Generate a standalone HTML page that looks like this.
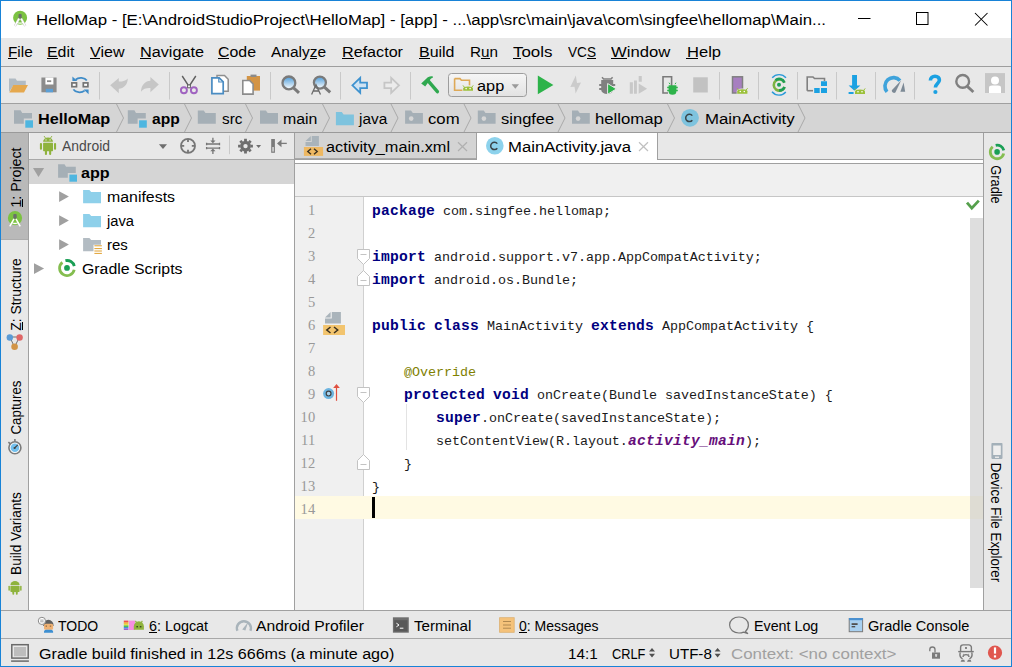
<!DOCTYPE html>
<html><head><meta charset="utf-8">
<style>
*{margin:0;padding:0;box-sizing:border-box}
html,body{width:1012px;height:667px;overflow:hidden;background:#fff}
body{position:relative;font-family:"Liberation Sans",sans-serif;color:#000}
.a{position:absolute}
.t{position:absolute;white-space:pre;line-height:1}
.u{text-decoration:none}
svg{position:absolute;overflow:visible}
.ln,.kw,.nm,.ann,.fld{font-family:"Liberation Mono",monospace;font-size:13.4px}
.ln{color:#999999;font-family:"Liberation Serif",serif!important;font-size:14.5px!important}
.nm{color:#1a1a1a}
.kw{font-weight:bold;color:#000080}
.ann{color:#808000}
.fld{font-weight:bold;font-style:italic;color:#660e7a}
</style></head><body>
<!-- backgrounds -->
<div class="a" style="left:0;top:0;width:1012px;height:38px;background:#fff"></div>
<div class="a" style="left:0;top:38px;width:1012px;height:28px;background:#e8e8e8"></div>
<div class="a" style="left:0;top:66px;width:1012px;height:1px;background:#9e9e9e"></div>
<div class="a" style="left:0;top:67px;width:1012px;height:36px;background:#e8e8e8"></div>
<div class="a" style="left:0;top:103px;width:1012px;height:1px;background:#a0a0a0"></div>
<div class="a" style="left:0;top:104px;width:1012px;height:28px;background:#d5d5d5"></div>
<div class="a" style="left:0;top:132px;width:1012px;height:1px;background:#9a9a9a"></div>
<!-- left strip -->
<div class="a" style="left:0;top:133px;width:28px;height:478px;background:#e8e8e8"></div>
<div class="a" style="left:1px;top:133px;width:27px;height:107px;background:#b9b9b9"></div>
<div class="a" style="left:1px;top:239px;width:27px;height:1px;background:#adadad"></div>
<div class="a" style="left:28px;top:133px;width:1px;height:478px;background:#a0a0a0"></div>
<!-- project panel -->
<div class="a" style="left:29px;top:133px;width:265px;height:26px;background:#e8e8e8"></div>
<div class="a" style="left:29px;top:159px;width:265px;height:1px;background:#a8a8a8"></div>
<div class="a" style="left:29px;top:133px;width:1px;height:26px;background:#f4f4f4"></div>
<div class="a" style="left:29px;top:160px;width:265px;height:451px;background:#fff"></div>
<div class="a" style="left:29px;top:160px;width:265px;height:24px;background:#d5d5d5"></div>
<div class="a" style="left:294px;top:133px;width:1px;height:478px;background:#a0a0a0"></div>
<!-- editor tabs -->
<div class="a" style="left:295px;top:133px;width:688px;height:26px;background:#e8e8e8"></div>
<div class="a" style="left:295px;top:159px;width:688px;height:1px;background:#a0a0a0"></div>
<div class="a" style="left:295px;top:160px;width:688px;height:3px;background:#fff"></div>
<div class="a" style="left:295px;top:133px;width:181px;height:25px;background:#d4d4d4"></div>
<div class="a" style="left:295px;top:158px;width:181px;height:1px;background:#a8a8a8"></div>
<div class="a" style="left:476px;top:133px;width:1px;height:26px;background:#a0a0a0"></div>
<div class="a" style="left:477px;top:133px;width:180px;height:30px;background:#fff"></div>
<div class="a" style="left:657px;top:133px;width:1px;height:27px;background:#a0a0a0"></div>
<div class="a" style="left:295px;top:163px;width:688px;height:1px;background:#a0a0a0"></div>
<div class="a" style="left:295px;top:164px;width:688px;height:32px;background:#f0f0f0"></div>
<div class="a" style="left:295px;top:196px;width:688px;height:1px;background:#c6c6c6"></div>
<!-- editor -->
<div class="a" style="left:295px;top:197px;width:688px;height:413px;background:#fff"></div>
<div class="a" style="left:295px;top:197px;width:68px;height:413px;background:#f0f0f0"></div>
<div class="a" style="left:363px;top:197px;width:1px;height:413px;background:#d0d0d0"></div>
<div class="a" style="left:295px;top:496px;width:688px;height:23px;background:#fffae3"></div>
<div class="a" style="left:970px;top:218px;width:13px;height:370px;background:rgba(200,200,200,0.6)"></div>
<div class="a" style="left:983px;top:133px;width:1px;height:478px;background:#a0a0a0"></div>
<!-- right strip -->
<div class="a" style="left:984px;top:133px;width:28px;height:478px;background:#e8e8e8"></div>
<!-- bottom -->
<div class="a" style="left:0;top:610px;width:1012px;height:1px;background:#a0a0a0"></div>
<div class="a" style="left:0;top:611px;width:1012px;height:27px;background:#e8e8e8"></div>
<div class="a" style="left:0;top:638px;width:1012px;height:1px;background:#a8a8a8"></div>
<div class="a" style="left:0;top:639px;width:1012px;height:28px;background:#e8e8e8"></div>
<div class="t ln" style="left:275.5px;width:40px;text-align:right;top:202.70px;letter-spacing:0.3px">1</div>
<div class="t kw" style="left:372.0px;top:204.41px;font-size:14.6px;letter-spacing:0.240px">package</div>
<div class="t nm" style="left:435.0px;top:205.33px;font-size:13.4px;letter-spacing:-0.040px"> com.singfee.hellomap;</div>
<div class="t ln" style="left:275.5px;width:40px;text-align:right;top:225.70px;letter-spacing:0.3px">2</div>
<div class="t ln" style="left:275.5px;width:40px;text-align:right;top:248.70px;letter-spacing:0.3px">3</div>
<div class="t kw" style="left:372.0px;top:250.41px;font-size:14.6px;letter-spacing:0.240px">import</div>
<div class="t nm" style="left:426.0px;top:251.33px;font-size:13.4px;letter-spacing:-0.040px"> android.support.v7.app.AppCompatActivity;</div>
<div class="t ln" style="left:275.5px;width:40px;text-align:right;top:271.70px;letter-spacing:0.3px">4</div>
<div class="t kw" style="left:372.0px;top:273.41px;font-size:14.6px;letter-spacing:0.240px">import</div>
<div class="t nm" style="left:426.0px;top:274.33px;font-size:13.4px;letter-spacing:-0.040px"> android.os.Bundle;</div>
<div class="t ln" style="left:275.5px;width:40px;text-align:right;top:294.70px;letter-spacing:0.3px">5</div>
<div class="t ln" style="left:275.5px;width:40px;text-align:right;top:317.70px;letter-spacing:0.3px">6</div>
<div class="t kw" style="left:372.0px;top:319.41px;font-size:14.6px;letter-spacing:0.240px">public</div>
<div class="t kw" style="left:434.0px;top:319.41px;font-size:14.6px;letter-spacing:0.240px">class</div>
<div class="t nm" style="left:479.0px;top:320.33px;font-size:13.4px;letter-spacing:-0.040px"> MainActivity </div>
<div class="t kw" style="left:591.0px;top:319.41px;font-size:14.6px;letter-spacing:0.240px">extends</div>
<div class="t nm" style="left:654.0px;top:320.33px;font-size:13.4px;letter-spacing:-0.040px"> AppCompatActivity {</div>
<div class="t ln" style="left:275.5px;width:40px;text-align:right;top:340.70px;letter-spacing:0.3px">7</div>
<div class="t ln" style="left:275.5px;width:40px;text-align:right;top:363.70px;letter-spacing:0.3px">8</div>
<div class="t ann" style="left:404.0px;top:366.33px;font-size:13.4px;letter-spacing:-0.040px">@Override</div>
<div class="t ln" style="left:275.5px;width:40px;text-align:right;top:386.70px;letter-spacing:0.3px">9</div>
<div class="t kw" style="left:404.0px;top:388.41px;font-size:14.6px;letter-spacing:0.240px">protected</div>
<div class="t kw" style="left:493.0px;top:388.41px;font-size:14.6px;letter-spacing:0.240px">void</div>
<div class="t nm" style="left:529.0px;top:389.33px;font-size:13.4px;letter-spacing:-0.040px"> onCreate(Bundle savedInstanceState) {</div>
<div class="t ln" style="left:275.5px;width:40px;text-align:right;top:409.70px;letter-spacing:0.3px">10</div>
<div class="t kw" style="left:436.0px;top:411.41px;font-size:14.6px;letter-spacing:0.240px">super</div>
<div class="t nm" style="left:481.0px;top:412.33px;font-size:13.4px;letter-spacing:-0.040px">.onCreate(savedInstanceState);</div>
<div class="t ln" style="left:275.5px;width:40px;text-align:right;top:432.70px;letter-spacing:0.3px">11</div>
<div class="t nm" style="left:372.0px;top:435.33px;font-size:13.4px;letter-spacing:-0.040px">        setContentView(R.layout.</div>
<div class="t fld" style="left:628.0px;top:434.41px;font-size:14.6px;letter-spacing:0.240px">activity_main</div>
<div class="t nm" style="left:745.0px;top:435.33px;font-size:13.4px;letter-spacing:-0.040px">);</div>
<div class="t ln" style="left:275.5px;width:40px;text-align:right;top:455.70px;letter-spacing:0.3px">12</div>
<div class="t nm" style="left:372.0px;top:458.33px;font-size:13.4px;letter-spacing:-0.040px">    }</div>
<div class="t ln" style="left:275.5px;width:40px;text-align:right;top:478.70px;letter-spacing:0.3px">13</div>
<div class="t nm" style="left:372.0px;top:481.33px;font-size:13.4px;letter-spacing:-0.040px">}</div>
<div class="t ln" style="left:275.5px;width:40px;text-align:right;top:501.70px;letter-spacing:0.3px">14</div>
<svg width="1012" height="667" viewBox="0 0 1012 667" style="left:0;top:0">
<defs>
<linearGradient id="lens" x1="0" y1="0" x2="0" y2="1"><stop offset="0" stop-color="#4a9ad8"/><stop offset="1" stop-color="#ffffff"/></linearGradient>
<linearGradient id="combo" x1="0" y1="0" x2="0" y2="1"><stop offset="0" stop-color="#f6f6f6"/><stop offset="1" stop-color="#e2e2e2"/></linearGradient>
</defs>
<!-- ===== title bar ===== -->
<g transform="translate(20.1 17.8)"><circle r="7" fill="#7cc242"/>
<rect x="-1.6" y="-3.8" width="3.2" height="4.6" rx="1" fill="#6a6f6a"/>
<path d="M-1 0.8 L-5.2 8.2 M1 0.8 L5.2 8.2" stroke="#c9c9c9" stroke-width="2.4" fill="none"/>
<path d="M-1 0.8 L-5.2 8.2 M1 0.8 L5.2 8.2" stroke="#ffffff" stroke-width="1.4" fill="none"/>
<path d="M-3.6 4.4 Q0 6.4 3.6 4.4" stroke="#ffffff" stroke-width="1.3" fill="none"/></g>
<path d="M858 18.5h12.5" stroke="#000" stroke-width="1"/>
<rect x="916.5" y="12.5" width="11.5" height="12" fill="none" stroke="#000" stroke-width="1"/>
<path d="M975 13 L987.5 25.5 M987.5 13 L975 25.5" stroke="#000" stroke-width="1.05"/>

<!-- ===== toolbar ===== -->
<g stroke="#c9c9c9" stroke-width="1">
<path d="M99.5 72v27.5 M169.5 72v27.5 M270.5 72v27.5 M340.5 72v27.5 M410.5 72v27.5 M719.5 72v27.5 M758.5 72v27.5 M797.5 72v27.5 M836.5 72v27.5 M875.5 72v27.5 M914.5 72v27.5"/>
</g>
<!-- open -->
<path d="M9 78.5h6.5l1.5 2.2h8.8v5H13.2L9 92z" fill="#b1bbc3"/>
<path d="M9.3 92.6 L13.3 85 H28 L24 92.6z" fill="#e5a84e"/>
<!-- save -->
<path d="M41.4 77.5h15.2v14.8H41.4z" fill="#8c8c8c"/>
<path d="M45.4 77.5h8v7h-8z" fill="#ffffff"/>
<path d="M47 80.3h4.2v1.8H47z" fill="#8c8c8c"/>
<path d="M45.8 88.8h7.2v3.5h-7.2z" fill="#5b9fd6"/>
<!-- sync -->
<path d="M75.6 79.6 A6.6 4.6 0 0 1 86.8 80.6 M73.4 89.4 A6.6 4.6 0 0 0 84.6 90.6" stroke="#3f8cc8" stroke-width="1.8" fill="none"/>
<path d="M72.4 76.4 V81 H77.4z M88.6 94.2 V89.4 H83.6z" fill="#3f8cc8"/>
<rect x="71.9" y="82.9" width="4.6" height="3.8" fill="#fff" stroke="#747474" stroke-width="1.7"/>
<rect x="83.3" y="82.9" width="4.6" height="3.8" fill="#fff" stroke="#747474" stroke-width="1.7"/>
<!-- undo/redo -->
<path d="M110.2 85.3 L118.8 77.9 V81.6 C123 81.5 126.5 80.5 127.8 78.4 C127.6 84.6 123.8 88.4 118.8 88.8 V93.2z" fill="#c6c6c6"/>
<path d="M158.8 84.4 L150.4 77 V80.8 C145.5 81 141.2 84.6 141 91.8 C143.2 88.6 146.6 87.8 150.4 88 V92.3z" fill="#c6c6c6"/>
<!-- cut -->
<path d="M182.2 76 L189 86.5 L195.8 76" stroke="#606060" stroke-width="1.4" fill="none"/>
<rect x="187.6" y="85" width="2.8" height="2.8" fill="#fff" stroke="#606060" stroke-width="1"/>
<circle cx="183.9" cy="90.3" r="3" fill="none" stroke="#a064c0" stroke-width="1.9"/>
<circle cx="193.9" cy="90.3" r="3" fill="none" stroke="#a064c0" stroke-width="1.9"/>
<!-- copy -->
<path d="M217 75.5h7.5l3.7 3.7v12h-11.2z" fill="#fff" stroke="#8f8f8f" stroke-width="1.5"/>
<path d="M211.9 77.9h7.3l4 4v11.8h-11.3z" fill="#fff" stroke="#4a8cc2" stroke-width="1.7"/>
<path d="M218.8 78v4h4" fill="none" stroke="#4a8cc2" stroke-width="1.2"/>
<!-- paste -->
<path d="M246.8 76h13.2v14.6h-13.2z" fill="#d39445"/>
<path d="M250.5 74.6h6v2.4h-6z" fill="#8a8a8a"/>
<path d="M242.8 80.5h6.8l3.5 3.5v10.1h-10.3z" fill="#fff" stroke="#8c8c8c" stroke-width="1.6"/>
<!-- find -->
<circle cx="288.9" cy="82.9" r="6.4" fill="url(#lens)" stroke="#7a7a7a" stroke-width="2.3"/>
<path d="M293.6 87.8 L299 92.8" stroke="#7a7a7a" stroke-width="3"/>
<!-- replace -->
<circle cx="319.9" cy="82.6" r="6" fill="url(#lens)" stroke="#7a7a7a" stroke-width="2.3"/>
<path d="M324.4 87.2 L330.2 92.4" stroke="#7a7a7a" stroke-width="3"/>
<path d="M311.6 94.5 L316 84.8 L320.5 94.5 M313.2 91 H318.8" stroke="#6a6a6a" stroke-width="1.3" fill="none"/>
<!-- back / forward -->
<path d="M352.4 85.3 L360.2 77.8 V82.6 H367 V88.1 H360.2 V92.8z" fill="#cfe3f3" stroke="#3e92cf" stroke-width="1.8" stroke-linejoin="miter"/>
<path d="M399 85.3 L391.2 77.8 V82.6 H384.4 V88.1 H391.2 V92.8z" fill="#ececec" stroke="#c6c6c6" stroke-width="1.8"/>
<!-- hammer -->
<path d="M421.2 83.4 L427.8 77.2 C429.8 76.2 431.6 76 432.8 76.4 L433 77.6 C431.6 78.2 430.6 79 429.8 80.2 L425.2 86.4z" fill="#2fa84f"/>
<path d="M428.6 81.4 L437.4 91.6" stroke="#2fa84f" stroke-width="3.4" stroke-linecap="round"/>
<!-- combo -->
<rect x="448.5" y="73.5" width="78" height="23" rx="3" fill="url(#combo)" stroke="#9d9d9d" stroke-width="1"/>
<path d="M454.6 78.6h5.4l1.4 1.6h8.1v5.2 M454.6 78.6v11.6h8" fill="none" stroke="#dea957" stroke-width="1.6"/>
<path d="M462.7 91.1 V88.2 Q462.7 85.6 468.1 85.6 Q473.5 85.6 473.5 88.2 V91.1z" fill="#ececec"/><path d="M463.2 90.8 V88.4 Q463.2 86.4 468.1 86.4 Q473.0 86.4 473.0 88.4 V90.8z" fill="#9bc03a"/><path d="M464.4 87.2 l-1.4 -1.8 M471.8 87.2 l1.4 -1.8" stroke="#9bc03a" stroke-width="1"/><circle cx="466.1" cy="88.6" r="0.8" fill="#fff"/><circle cx="470.1" cy="88.6" r="0.8" fill="#fff"/>
<path d="M511.6 84.2h7.4l-3.7 4.5z" fill="#9a9a9a"/>
<!-- run -->
<path d="M537.8 75.6 V94.2 L553.4 84.9z" fill="#2db34a"/>
<!-- lightning -->
<path d="M575.8 75.4 L570.3 87.1 L574.5 86.8 L575.6 93.4 L581 82.5 L577 82.9z" fill="#cbcbcb"/>
<!-- debug -->
<path d="M602 77.2 L603.6 79 H611 L612.6 77.2" stroke="#808080" stroke-width="1.5" fill="none"/>
<path d="M601.2 80 h12 v4 h2 v2 h-2 v2 h2 v2 h-2 a6 4 0 0 1 -12 0 h-2 v-2 h2 v-2 h-2 v-2 h2z" fill="#808080"/>
<path d="M607.6 83.5 V94.3 L616.4 88.9z" fill="#2db34a" stroke="#e8e8e8" stroke-width="1"/>
<!-- profile -->
<path d="M629.8 82.2h3.1v11.6h-3.1z M634 80.5h2.9v13.3H634z M638.7 76h3.1v5.8h-3.1z M638.7 83.6 V93.8 L647.1 88.8z" fill="#c8c8c8"/>
<!-- attach -->
<path d="M671.6 86 V76.8 H663 V93 H668" fill="none" stroke="#7a7a7a" stroke-width="1.6"/>
<path d="M668.6 85.2 h7.8 v1.5 h1.4 v1.5 h-1.4 v1.5 h1.4 v1.5 h-1.4 a3.9 3.6 0 0 1 -7.8 0 h-1.4 v-1.5 h1.4 v-1.5 h-1.4 v-1.5 h1.4z" fill="#2db34a"/>
<path d="M670 84.2 l-1 -1.5 M675 84.2 l1 -1.5" stroke="#2db34a" stroke-width="1"/>
<!-- stop -->
<rect x="693.2" y="77.3" width="14.6" height="15.2" fill="#c2c2c2"/>
<!-- avd -->
<rect x="732.5" y="76.8" width="10" height="16.2" fill="#a77fc0" stroke="#808080" stroke-width="1.5"/>
<path d="M736.7 94.1 V91.0 Q736.7 88.4 742.3 88.4 Q747.9 88.4 747.9 91.0 V94.1z" fill="#e8e8e8"/><path d="M737.2 93.8 V91.3 Q737.2 89.2 742.3 89.2 Q747.4 89.2 747.4 91.3 V93.8z" fill="#9bc03a"/><path d="M738.4 90.0 l-1.4 -1.8 M746.2 90.0 l1.4 -1.8" stroke="#9bc03a" stroke-width="1"/><circle cx="740.3" cy="91.5" r="0.8" fill="#fff"/><circle cx="744.3" cy="91.5" r="0.8" fill="#fff"/>
<!-- gradle sync -->
<path d="M772.2 77.8 A9 9 0 0 1 786 77.8 M772 91.8 A9 9 0 0 0 785.8 92" stroke="#2a9ad8" stroke-width="1.4" fill="none"/>
<path d="M784.4 82.6 A5.6 5.6 0 1 0 784.6 87" stroke="#7cb342" stroke-width="2.6" fill="none"/>
<path d="M775.5 80.2 A5.6 5.6 0 0 1 784.4 82.6 M784.6 87 A5.6 5.6 0 0 1 779 90.4" stroke="#1f9e56" stroke-width="2.6" fill="none"/>
<circle cx="779" cy="84.8" r="2" fill="#1f9e56"/>
<!-- project structure -->
<path d="M807.2 90.7 V77 H813 L814.5 78.5 H824.5 V81" fill="none" stroke="#808080" stroke-width="1.6"/>
<path d="M807.2 90.7 H813" stroke="#808080" stroke-width="1.6"/>
<path d="M821 81.2h6v4.9h-6z M814.2 88.1h5.5v4.8h-5.5z M821 88.1h6v4.8h-6z" fill="#1ba1e2"/>
<!-- sdk -->
<path d="M852.1 75.1h4.9v10.4h3.4l-5.9 5.2l-5.9 -5.2h3.5z" fill="#1ba1e2"/>
<path d="M848.6 92h5v2h-5z" fill="#1ba1e2"/>
<path d="M854.5 94.4 V91.3 Q854.5 88.6 860.0 88.6 Q865.5 88.6 865.5 91.3 V94.4z" fill="#e8e8e8"/><path d="M855.0 94.1 V91.5 Q855.0 89.4 860.0 89.4 Q865.0 89.4 865.0 91.5 V94.1z" fill="#9bc03a"/><path d="M856.2 90.2 l-1.4 -1.8 M863.8 90.2 l1.4 -1.8" stroke="#9bc03a" stroke-width="1"/><circle cx="858.0" cy="91.8" r="0.8" fill="#fff"/><circle cx="862.0" cy="91.8" r="0.8" fill="#fff"/>
<!-- profiler gauge -->
<path d="M887 91.8 A8 8 0 0 1 900 80.6" stroke="#3fa3db" stroke-width="3.6" fill="none"/>
<path d="M901.2 80.2 L891.8 90.2 a2.4 2.4 0 0 0 3.6 2.4z" fill="#7d8a96"/>
<path d="M903.6 82.6 L900.4 91.8 H905.2z" fill="#7d8a96"/>
<!-- help -->
<path d="M930.4 80.6 C930.4 77.6 932.6 76.2 935 76.2 C937.8 76.2 939.4 78 939.4 80 C939.4 83.4 935.4 83.6 935.4 87.6" stroke="#1ba1e2" stroke-width="3.6" fill="none"/>
<circle cx="935.4" cy="92" r="2.1" fill="#1ba1e2"/>
<!-- search -->
<circle cx="962.7" cy="81.4" r="6.4" fill="none" stroke="#808080" stroke-width="2.4"/>
<path d="M967.3 86.4 L973.4 92" stroke="#808080" stroke-width="2.8"/>
<!-- user -->
<rect x="985" y="73.1" width="20" height="19.9" fill="#c6c6c6"/>
<circle cx="995" cy="80.6" r="4" fill="#fff"/>
<path d="M989 93 V88 a3 2.4 0 0 1 3 -2.4 h6 a3 2.4 0 0 1 3 2.4 V93z" fill="#fff"/>

<!-- ===== navbar ===== -->
<g stroke="#a9a9a9" stroke-width="1" fill="none">
<path d="M116.5 104 L123.5 118 L116.5 132"/>
<path d="M184.5 104 L191.5 118 L184.5 132"/>
<path d="M245.5 104 L252.5 118 L245.5 132"/>
<path d="M322.5 104 L329.5 118 L322.5 132"/>
<path d="M391 104 L398 118 L391 132"/>
<path d="M464 104 L471 118 L464 132"/>
<path d="M558 104 L565 118 L558 132"/>
<path d="M667.5 104 L674.5 118 L667.5 132"/>
<path d="M798 104 L805 118 L798 132"/>
</g>
<!-- module folders -->
<path d="M14 110.2 H20.6 L22.2 112.9 H32 V118.6 H23.8 V123.8 H14z" fill="#a5afb6"/>
<rect x="25.3" y="120.3" width="7.7" height="7.4" fill="#4eb6e0"/>
<path d="M127.8 110.2 H134.4 L136 112.9 H145.8 V118.6 H137.6 V123.8 H127.8z" fill="#a5afb6"/>
<rect x="139.1" y="120.3" width="7.7" height="7.4" fill="#4eb6e0"/>
<!-- src, main folder -->
<path d="M197.8 110.4 H203.7 L205.5 113.1 H215.8 V123.8 H197.8z" fill="#a5afb6"/>
<path d="M260 110.4 H265.9 L267.7 113.1 H278 V123.8 H260z" fill="#a5afb6"/>
<!-- java folder -->
<path d="M335.9 111.9 H341.8 L343.6 114.6 H353.9 V125.2 H335.9z" fill="#7ec3de"/>
<!-- packages -->
<g fill="#a5afb6">
<path d="M405.1 110.4 H411 L412.8 113.1 H422.9 V123.8 H405.1z"/>
<path d="M477.8 110.4 H483.7 L485.5 113.1 H495.6 V123.8 H477.8z"/>
<path d="M572 110.4 H577.9 L579.7 113.1 H589.8 V123.8 H572z"/>
</g>
<g fill="#d6d6d6">
<circle cx="411.2" cy="118.6" r="2.3"/><circle cx="483.9" cy="118.6" r="2.3"/><circle cx="578.1" cy="118.6" r="2.3"/>
</g>
<!-- class icon -->
<circle cx="690" cy="117.8" r="8.9" fill="#7ec3de"/>
<path d="M692.30 115.60 A3.7 3.7 0 1 0 692.30 120.20" stroke="#3a4448" stroke-width="1.5" fill="none"/>

<!-- ===== project header ===== -->
<g fill="#8fb33d">
<path d="M43.1 141.8 a4.95 4.4 0 0 1 9.9 0z"/>
<rect x="43.1" y="142.8" width="9.9" height="8.4" rx="0.6"/>
<rect x="39.9" y="142.9" width="2.1" height="6.9" rx="1"/>
<rect x="54" y="142.9" width="2.1" height="6.9" rx="1"/>
<rect x="44.9" y="150" width="2.1" height="4.9" rx="1"/>
<rect x="49.1" y="150" width="2.1" height="4.9" rx="1"/>
</g>
<path d="M44 136 l1.6 2.2 M52 136 l-1.6 2.2" stroke="#8fb33d" stroke-width="0.9"/>
<circle cx="46" cy="139.9" r="0.7" fill="#e8e8e8"/><circle cx="50.1" cy="139.9" r="0.7" fill="#e8e8e8"/>
<path d="M158.9 144.3 H167 L163 149z" fill="#6e6e6e"/>
<circle cx="188" cy="145.9" r="7" fill="none" stroke="#767676" stroke-width="1.8"/>
<path d="M188 138.9v3.2 M188 149.7v3.2 M181 145.9h3.2 M191.8 145.9h3.2" stroke="#767676" stroke-width="1.8"/>
<path d="M206.1 144h13.9 M206.1 148.1h13.9 M206.6 142.8v2.4 M219.5 142.8v2.4 M206.6 146.9v2.4 M219.5 146.9v2.4" stroke="#767676" stroke-width="1.3"/>
<path d="M212.9 137.8v3.6 M212.9 150.6v3.4" stroke="#767676" stroke-width="1.3"/>
<path d="M210.3 140.6h5.2l-2.6 2.6z M210.3 151.2h5.2l-2.6 -2.6z" fill="#767676"/>
<path d="M229.5 135.5v18.7" stroke="#c9c9c9" stroke-width="1"/>
<g transform="translate(245.5 146.1)" fill="#6e6e6e">
<path d="M-1.4 -7.4h2.8v2.4h-2.8z M-1.4 5h2.8v2.4h-2.8z M-7.4 -1.4h2.4v2.8h-2.4z M5 -1.4h2.4v2.8h-2.4z"/>
<path d="M-1.4 -7.4h2.8v2.4h-2.8z M-1.4 5h2.8v2.4h-2.8z M-7.4 -1.4h2.4v2.8h-2.4z M5 -1.4h2.4v2.8h-2.4z" transform="rotate(45)"/>
<circle r="5.4"/>
<circle r="2.2" fill="#e8e8e8"/>
</g>
<path d="M256.1 145.1h5l-2.5 3z" fill="#6e6e6e"/>
<rect x="271.2" y="139" width="3.7" height="13.8" fill="#7a7a7a"/>
<rect x="272.4" y="147" width="1.3" height="4.6" fill="#e8e8e8"/>
<path d="M278 143.4 H286.8" stroke="#7a7a7a" stroke-width="1.3"/>
<path d="M277 143.4 L281.5 139.6 V147.2z" fill="#7a7a7a"/>

<!-- ===== tree ===== -->
<path d="M33 167.9 H44.1 L38.5 177z" fill="#a0a0a0"/>
<path d="M58.1 164.3 H64.5 L66.1 166.8 H75.8 V172.9 H67.8 V177.8 H58.1z" fill="#a5afb6"/>
<rect x="69.4" y="174.6" width="7.6" height="7.1" fill="#4eb6e0"/>
<g fill="#a0a0a0">
<path d="M59.1 191.2 V201.9 L68.9 196.5z"/>
<path d="M59.1 215.2 V225.9 L68.9 220.5z"/>
<path d="M59.1 239.2 V249.9 L68.9 244.5z"/>
<path d="M34 263.2 V273.9 L44.1 268.6z"/>
</g>
<path d="M83.1 190 H89.4 L91.2 192 H101 V203.3 H83.1z" fill="#8ed0ea"/>
<path d="M83.1 214 H89.4 L91.2 216 H101 V227.3 H83.1z" fill="#8ed0ea"/>
<path d="M83.1 237.9 H89.4 L91.2 239.9 H101 V244.8 H93.5 V251.3 H83.1z" fill="#b3bcc3"/>
<path d="M94.4 245.8h7.5 M94.4 248.6h7.5 M94.4 251h7.5 M94.4 253.4h7.5" stroke="#e0a030" stroke-width="1"/>
<!-- gradle -->
<g transform="translate(67 267.9)">
<path d="M-4.6 -5.6 A7.4 7.4 0 1 0 7.2 1.8" stroke="#84bd4f" stroke-width="2.8" fill="none"/>
<path d="M-1.6 -7.2 A7.4 7.4 0 0 1 7.3 -1.8" stroke="#1a9f55" stroke-width="2.8" fill="none"/>
<circle r="2.9" fill="#1a9f55"/></g>

<!-- ===== tabs ===== -->
<path d="M305.5 141 L310.8 136 V141z" fill="#a9b3ba"/>
<path d="M311.8 136 H318.9 V145.9 H305.5 V142 H311.8z" fill="#a9b3ba"/>
<rect x="303.9" y="147" width="19.2" height="8.9" fill="#eeb862"/>
<path d="M311 148.8 L307.8 151.5 L311 154.2 M314 148.8 L317.2 151.5 L314 154.2" stroke="#3a3020" stroke-width="1.4" fill="none"/>
<path d="M458 142.2 L467 151 M467 142.2 L458 151" stroke="#b0b0b0" stroke-width="1.2"/>
<circle cx="494.8" cy="145.8" r="8.8" fill="#8dd2ec"/>
<path d="M497.30 143.60 A3.7 3.7 0 1 0 497.30 148.20" stroke="#3a4448" stroke-width="1.5" fill="none"/>
<path d="M639 142.2 L648 151 M648 142.2 L639 151" stroke="#c0c0c0" stroke-width="1.2"/>

<!-- ===== gutter ===== -->
<path d="M325 317.4 L330.6 312 V317.4z" fill="#aab4bb"/>
<path d="M331.8 312 H340.9 V323.5 H325 V318.6 H331.8z" fill="#aab4bb"/>
<rect x="323.1" y="325" width="21.9" height="10" fill="#f2c46e"/>
<path d="M330.5 327 L326.8 330 L330.5 333 M334 327 L337.7 330 L334 333" stroke="#3a3020" stroke-width="1.5" fill="none"/>
<circle cx="328.6" cy="393.6" r="5.5" fill="#6cb4e0"/>
<circle cx="328.6" cy="393.6" r="2.4" fill="#a9d3ee" stroke="#404040" stroke-width="1.2"/>
<path d="M336.5 387 V400.8" stroke="#e05040" stroke-width="1.2"/>
<path d="M333.2 388 H339.8 L336.5 384z" fill="#e05040"/>
<!-- fold markers -->
<g fill="#fff" stroke="#c3c3c3" stroke-width="1">
<path d="M357.5 249.5 H369.5 V258.5 L363.5 264.5 L357.5 258.5z"/>
<path d="M357.5 285.5 H369.5 V276.5 L363.5 270.5 L357.5 276.5z"/>
<path d="M357.5 387.5 H369.5 V396.5 L363.5 402.5 L357.5 396.5z"/>
<path d="M357.5 469.5 H369.5 V460.5 L363.5 454.5 L357.5 460.5z"/>
</g>
<path d="M360.5 254.5h6 M360.5 280.5h6 M360.5 392.5h6 M360.5 464.5h6" stroke="#c3c3c3" stroke-width="1"/>
<!-- indent guide -->
<path d="M406.5 404v46" stroke="#e3e3e3" stroke-width="1"/>
<!-- caret -->
<rect x="372" y="497" width="3" height="21" fill="#000"/>
<!-- check -->
<path d="M967 202.6 L971.8 208.2 L978.8 200.6" stroke="#55a04c" stroke-width="2.8" fill="none"/>

<!-- ===== left strip icons ===== -->
<g transform="translate(15 218.1)"><circle r="7.1" fill="#7cc242"/>
<rect x="-1.7" y="-4" width="3.4" height="4.6" rx="1" fill="#6a6f6a"/>
<path d="M-1 0.8 L-5.2 8.2 M1 0.8 L5.2 8.2" stroke="#ffffff" stroke-width="1.5" fill="none"/>
<path d="M-3.6 4.4 Q0 6.4 3.6 4.4" stroke="#ffffff" stroke-width="1.3" fill="none"/></g>
<!-- structure -->
<path d="M9.8 337 L14.5 347 L19.5 337z" fill="none" stroke="#707070" stroke-width="1"/>
<circle cx="9.8" cy="337.5" r="3.2" fill="#5b9bd5"/>
<circle cx="19.6" cy="337.5" r="3.2" fill="#e06666"/>
<circle cx="14.6" cy="346.8" r="3.3" fill="#d29446"/>
<!-- captures -->
<circle cx="14.9" cy="447.8" r="6" fill="#fafafa" stroke="#7b7b7b" stroke-width="1.6"/>
<circle cx="14.9" cy="447.8" r="4.3" fill="#72c0ee"/>
<path d="M14.6 448 L17.8 444.8" stroke="#444" stroke-width="1.2"/>
<circle cx="14.6" cy="448" r="1.1" fill="#444"/>
<path d="M8.4 442.2 l2.2 2 M14.9 439 v2.4" stroke="#7b7b7b" stroke-width="1.6"/>
<!-- build variants android -->
<g fill="#8fb33d">
<path d="M10.4 585 a4.6 4 0 0 1 9.2 0z"/>
<rect x="10.4" y="585.8" width="9.2" height="6.2" rx="0.8"/>
<rect x="8.4" y="585.8" width="1.5" height="5" rx="0.7"/>
<rect x="20.1" y="585.8" width="1.5" height="5" rx="0.7"/>
<rect x="12.4" y="591.5" width="1.8" height="3.2" rx="0.8"/>
<rect x="15.9" y="591.5" width="1.8" height="3.2" rx="0.8"/>
</g>
<!-- ===== right strip icons ===== -->
<g transform="translate(997.1 151.9)">
<path d="M-4.4 -5.2 A6.8 6.8 0 1 0 6.6 1.6" stroke="#84bd4f" stroke-width="2.8" fill="none"/>
<path d="M-1.4 -6.6 A6.8 6.8 0 0 1 6.7 -1.6" stroke="#1a9f55" stroke-width="2.8" fill="none"/>
<circle r="2.8" fill="#1a9f55"/></g>
<rect x="991.4" y="443" width="11.1" height="15.9" rx="0.8" fill="#a3b0b9"/>
<rect x="993.2" y="445.5" width="7.6" height="9.5" fill="#eeeeee"/>
<rect x="995" y="456.6" width="4" height="1.3" fill="#eeeeee"/>

<!-- ===== bottom bar icons ===== -->
<!-- todo person -->
<path d="M43.2 625.5 a5.2 5.8 0 0 1 10.4 0 v0.6 h-10.4z" fill="#5f5f5f"/>
<rect x="44" y="623.8" width="9.1" height="6" rx="1.5" fill="#f0b274"/>
<rect x="45.6" y="625.6" width="1.4" height="1" fill="#7a5a3a"/><rect x="49.8" y="625.6" width="1.4" height="1" fill="#7a5a3a"/>
<path d="M44 632.8 v-1.4 a2 2 0 0 1 2 -1.6 h5.1 a2 2 0 0 1 2 1.6 v1.4z" fill="#3d8fd1"/>
<circle cx="41.9" cy="620.9" r="3.6" fill="#fff" stroke="#8a8a8a" stroke-width="1"/>
<path d="M40.2 620.1h3.4 M40.2 621.8h3.4" stroke="#8a8a8a" stroke-width="0.8"/>
<!-- logcat -->
<rect x="123.8" y="620.6" width="4.6" height="1.6" fill="#f05050"/>
<rect x="123.8" y="622.2" width="4.6" height="1.6" fill="#f0a030"/>
<rect x="123.8" y="623.8" width="4.6" height="1.6" fill="#e8e040"/>
<rect x="123.8" y="625.4" width="4.6" height="1.6" fill="#50c050"/>
<rect x="123.8" y="627" width="4.6" height="1.6" fill="#4090e0"/>
<rect x="123.8" y="628.6" width="4.6" height="1.4" fill="#a060d0"/>
<rect x="129" y="620.6" width="6" height="9.4" fill="#f58ee0"/>
<path d="M133.8 629.8 v-3.4 a5 5.2 0 0 1 10.1 0 v3.4z" fill="#8fb33d"/>
<path d="M135.4 620.8 l2.2 3 M142.4 620.8 l-2.2 3" stroke="#8fb33d" stroke-width="1.1"/>
<rect x="136.4" y="626" width="1.6" height="1.4" fill="#3a4a20"/><rect x="139.8" y="626" width="1.6" height="1.4" fill="#3a4a20"/>
<!-- profiler -->
<path d="M237.4 630.8 A7 7 0 1 1 250.4 630.8" stroke="#a9b4bb" stroke-width="2.4" fill="none"/>
<path d="M242.2 629.6 L248.2 622 L245.4 630.6z" fill="#a9b4bb"/>
<!-- terminal -->
<rect x="392.9" y="617.3" width="15.9" height="15.4" fill="#6f6f6f"/>
<rect x="394.2" y="620.2" width="13.3" height="11.2" fill="#585858"/>
<path d="M396.4 623.2 l2.6 1.8 l-2.6 1.8 M399.8 628.2h3.6" stroke="#fff" stroke-width="1" fill="none"/>
<!-- messages -->
<rect x="499.6" y="617.7" width="14.6" height="14.6" fill="#f5c27a" stroke="#dcb070" stroke-width="0.8"/>
<path d="M503 621.5h8 M503 625h8 M503 628.2h8" stroke="#b08850" stroke-width="1"/>
<!-- event log -->
<path d="M745.4 631.4 C747.4 629.8 748.4 627.6 748.4 625 C748.4 620.4 744.4 617 739 617 C733.6 617 729.6 620.4 729.6 625 C729.6 629.6 733.6 633 739 633 C740.6 633 742.2 632.7 743.5 632.1 L748 633.6z" fill="none" stroke="#747474" stroke-width="1.2"/>
<!-- gradle console -->
<rect x="849.2" y="618.5" width="13.4" height="13.2" fill="#a8d0f0" stroke="#7a7a7a" stroke-width="1"/>
<rect x="849" y="618" width="14" height="2.2" fill="#4a90d0"/>
<rect x="851.6" y="623.2" width="6" height="1.8" fill="#505050"/>
<rect x="851.6" y="626" width="3.6" height="1.4" fill="#505050"/>

<!-- ===== status bar icons ===== -->
<rect x="11.8" y="644.7" width="16.4" height="13.4" fill="#e8e8e8" stroke="#6a6a6a" stroke-width="1.5"/>
<rect x="14" y="647" width="12" height="9.3" fill="#bdbdbd"/>
<path d="M11.1 661.1h17.8" stroke="#6a6a6a" stroke-width="1.5"/>
<path d="M649 651.5h6l-3 -3.6z M649 653.8h6l-3 3.6z" fill="#505050"/>
<path d="M714.6 651.5h6l-3 -3.6z M714.6 653.8h6l-3 3.6z" fill="#505050"/>
<!-- lock -->
<rect x="932" y="652.5" width="8" height="6.2" fill="#7a7a7a"/>
<path d="M935 654.2h2.2v1.2h-0.5v1.6h-1.2v-1.6h-0.5z" fill="#e8e8e8"/>
<path d="M929.8 651.2 V649.4 a2.6 2.4 0 0 1 5.2 0 V652.5" fill="none" stroke="#7a7a7a" stroke-width="1.3"/>
<!-- hector -->
<path d="M960.6 651.2 V647.4 a2.5 2.5 0 0 1 2.5 -2.5 h5.8 a2.5 2.5 0 0 1 2.5 2.5 V651.2" fill="none" stroke="#7a7a7a" stroke-width="1.4"/>
<path d="M958.2 651.6h15.6" stroke="#7a7a7a" stroke-width="1.4"/>
<circle cx="966" cy="648" r="0.9" fill="#555"/>
<path d="M960.2 652.4 C959.6 655 960 657.6 962.6 659 M971.8 652.4 C972.4 655 972 657.6 969.4 659 M963 657 a3 2.4 0 0 1 6 0" fill="none" stroke="#7a7a7a" stroke-width="1.4"/>
<path d="M960.6 661.8 h4.4 l-0.8 -2 h-2.6z M967 661.8 h4.4 l-0.8 -2 h-2.6z" fill="#7a7a7a"/>
<circle cx="963.6" cy="654.6" r="0.8" fill="#9a9a9a"/><circle cx="968.4" cy="654.6" r="0.8" fill="#9a9a9a"/>
<!-- error -->
<circle cx="995" cy="652.7" r="7.1" fill="#e0574f"/>
<path d="M995 647.4v6.2" stroke="#fff" stroke-width="2.2"/>
<rect x="993.9" y="655.3" width="2.2" height="2.2" fill="#fff"/>
</svg>

<div class="t" style="left:35.6px;top:13.08px;font-size:16px;color:#000;font-weight:normal;transform-origin:0 0;transform:scale(1.0501,0.9167)">HelloMap - [E:\AndroidStudioProject\HelloMap] - [app] - ...\app\src\main\java\com\singfee\hellomap\Main...</div>
<div class="t" style="left:8.0px;top:45.08px;font-size:16px;color:#000;font-weight:normal;transform-origin:0 0;transform:scale(0.9575,0.9167)"><span class=u>F</span>ile</div>
<div class="t" style="left:47.3px;top:45.08px;font-size:16px;color:#000;font-weight:normal;transform-origin:0 0;transform:scale(0.9935,0.9167)"><span class=u>E</span>dit</div>
<div class="t" style="left:90.0px;top:45.08px;font-size:16px;color:#000;font-weight:normal;transform-origin:0 0;transform:scale(1.0027,0.9167)"><span class=u>V</span>iew</div>
<div class="t" style="left:139.5px;top:45.08px;font-size:16px;color:#000;font-weight:normal;transform-origin:0 0;transform:scale(1.0134,0.9167)"><span class=u>N</span>avigate</div>
<div class="t" style="left:218.0px;top:45.08px;font-size:16px;color:#000;font-weight:normal;transform-origin:0 0;transform:scale(0.9931,0.9167)"><span class=u>C</span>ode</div>
<div class="t" style="left:271.0px;top:45.08px;font-size:16px;color:#000;font-weight:normal;transform-origin:0 0;transform:scale(0.9660,0.9167)">Analy<span class=u>z</span>e</div>
<div class="t" style="left:342.0px;top:45.08px;font-size:16px;color:#000;font-weight:normal;transform-origin:0 0;transform:scale(1.0085,0.9167)"><span class=u>R</span>efactor</div>
<div class="t" style="left:419.0px;top:45.08px;font-size:16px;color:#000;font-weight:normal;transform-origin:0 0;transform:scale(0.9978,0.9167)"><span class=u>B</span>uild</div>
<div class="t" style="left:470.0px;top:45.08px;font-size:16px;color:#000;font-weight:normal;transform-origin:0 0;transform:scale(0.9532,0.9167)">R<span class=u>u</span>n</div>
<div class="t" style="left:513.0px;top:45.08px;font-size:16px;color:#000;font-weight:normal;transform-origin:0 0;transform:scale(1.0573,0.9167)"><span class=u>T</span>ools</div>
<div class="t" style="left:568.0px;top:45.08px;font-size:16px;color:#000;font-weight:normal;transform-origin:0 0;transform:scale(0.8509,0.9167)">VC<span class=u>S</span></div>
<div class="t" style="left:611.4px;top:45.08px;font-size:16px;color:#000;font-weight:normal;transform-origin:0 0;transform:scale(1.0418,0.9167)"><span class=u>W</span>indow</div>
<div class="t" style="left:686.5px;top:45.08px;font-size:16px;color:#000;font-weight:normal;transform-origin:0 0;transform:scale(1.0327,0.9167)"><span class=u>H</span>elp</div>
<div class="t" style="left:37.8px;top:112.08px;font-size:16px;color:#000;font-weight:bold;transform-origin:0 0;transform:scale(1.0151,0.9167)">HelloMap</div>
<div class="t" style="left:151.7px;top:112.08px;font-size:16px;color:#000;font-weight:bold;transform-origin:0 0;transform:scale(0.9735,0.9167)">app</div>
<div class="t" style="left:221.6px;top:112.08px;font-size:16px;color:#000;font-weight:normal;transform-origin:0 0;transform:scale(0.9565,0.9167)">src</div>
<div class="t" style="left:283.2px;top:112.08px;font-size:16px;color:#000;font-weight:normal;transform-origin:0 0;transform:scale(0.9917,0.9167)">main</div>
<div class="t" style="left:358.8px;top:112.08px;font-size:16px;color:#000;font-weight:normal;transform-origin:0 0;transform:scale(0.9605,0.9167)">java</div>
<div class="t" style="left:428.2px;top:112.08px;font-size:16px;color:#000;font-weight:normal;transform-origin:0 0;transform:scale(1.0452,0.9167)">com</div>
<div class="t" style="left:501.0px;top:112.08px;font-size:16px;color:#000;font-weight:normal;transform-origin:0 0;transform:scale(1.0331,0.9167)">singfee</div>
<div class="t" style="left:595.0px;top:112.08px;font-size:16px;color:#000;font-weight:normal;transform-origin:0 0;transform:scale(1.0441,0.9167)">hellomap</div>
<div class="t" style="left:704.8px;top:112.08px;font-size:16px;color:#000;font-weight:normal;transform-origin:0 0;transform:scale(1.0509,0.9167)">MainActivity</div>
<div class="t" style="left:476.5px;top:79.44px;font-size:16px;color:#000;font-weight:normal;transform-origin:0 0;transform:scale(1.0186,0.8889)">app</div>
<div class="t" style="left:62.0px;top:139.00px;font-size:14.5px;color:#4a4a4a;font-weight:normal;transform-origin:0 0;transform:scale(0.9603,1.0000)">Android</div>
<div class="t" style="left:81.2px;top:166.44px;font-size:16px;color:#000;font-weight:bold;transform-origin:0 0;transform:scale(1.0052,0.8889)">app</div>
<div class="t" style="left:106.8px;top:190.44px;font-size:16px;color:#000;font-weight:normal;transform-origin:0 0;transform:scale(0.9932,0.8889)">manifests</div>
<div class="t" style="left:106.8px;top:214.44px;font-size:16px;color:#000;font-weight:normal;transform-origin:0 0;transform:scale(0.9196,0.8889)">java</div>
<div class="t" style="left:106.8px;top:238.44px;font-size:16px;color:#000;font-weight:normal;transform-origin:0 0;transform:scale(0.9355,0.8889)">res</div>
<div class="t" style="left:81.8px;top:262.44px;font-size:16px;color:#000;font-weight:normal;transform-origin:0 0;transform:scale(0.9914,0.8889)">Gradle Scripts</div>
<div class="t" style="left:326.0px;top:140.44px;font-size:16px;color:#000;font-weight:normal;transform-origin:0 0;transform:scale(1.0180,0.8889)">activity_main.xml</div>
<div class="t" style="left:508.0px;top:140.44px;font-size:16px;color:#000;font-weight:normal;transform-origin:0 0;transform:scale(1.0426,0.8889)">MainActivity.java</div>
<div class="t" style="left:58.2px;top:618.00px;font-size:15px;color:#000;font-weight:normal;transform-origin:0 0;transform:scale(0.9335,1.0000)">TODO</div>
<div class="t" style="left:148.6px;top:618.00px;font-size:15px;color:#000;font-weight:normal;transform-origin:0 0;transform:scale(0.9576,1.0000)"><span class=u>6</span>: Logcat</div>
<div class="t" style="left:256.4px;top:618.00px;font-size:15px;color:#000;font-weight:normal;transform-origin:0 0;transform:scale(1.0436,1.0000)">Android Profiler</div>
<div class="t" style="left:413.7px;top:618.00px;font-size:15px;color:#000;font-weight:normal;transform-origin:0 0;transform:scale(1.0108,1.0000)">Terminal</div>
<div class="t" style="left:519.2px;top:618.00px;font-size:15px;color:#000;font-weight:normal;transform-origin:0 0;transform:scale(0.9348,1.0000)"><span class=u>0</span>: Messages</div>
<div class="t" style="left:753.5px;top:618.00px;font-size:15px;color:#000;font-weight:normal;transform-origin:0 0;transform:scale(0.9517,1.0000)">Event Log</div>
<div class="t" style="left:868.0px;top:618.00px;font-size:15px;color:#000;font-weight:normal;transform-origin:0 0;transform:scale(0.9718,1.0000)">Gradle Console</div>
<div class="t" style="left:38.6px;top:647.08px;font-size:16px;color:#000;font-weight:normal;transform-origin:0 0;transform:scale(1.0065,0.9167)">Gradle build finished in 12s 666ms (a minute ago)</div>
<div class="t" style="left:567.8px;top:647.08px;font-size:16px;color:#000;font-weight:normal;transform-origin:0 0;transform:scale(0.9537,0.9167)">14:1</div>
<div class="t" style="left:612.2px;top:647.08px;font-size:16px;color:#000;font-weight:normal;transform-origin:0 0;transform:scale(0.7994,0.9167)">CRLF</div>
<div class="t" style="left:669.2px;top:647.08px;font-size:16px;color:#000;font-weight:normal;transform-origin:0 0;transform:scale(0.9442,0.9167)">UTF-8</div>
<div class="t" style="left:731.0px;top:647.08px;font-size:16px;color:#a0a0a0;font-weight:normal;transform-origin:0 0;transform:scale(1.0566,0.9167)">Context: &lt;no context&gt;</div>
<div class="t" style="left:-15.7px;top:169.85px;width:63.38px;font-size:15px;transform:rotate(-90deg) scaleX(0.9483)"><span class=u>1</span>: Project</div>
<div class="t" style="left:-23.7px;top:286.55px;width:78.38px;font-size:15px;transform:rotate(-90deg) scaleX(0.9250)"><span class=u>Z</span>: Structure</div>
<div class="t" style="left:-14.7px;top:400.00px;width:60.88px;font-size:15px;transform:rotate(-90deg) scaleX(0.8871)">Captures</div>
<div class="t" style="left:-29.7px;top:525.60px;width:91.44px;font-size:15px;transform:rotate(-90deg) scaleX(0.9055)">Build Variants</div>
<div class="t" style="left:973.9px;top:176.70px;width:45.03px;font-size:15px;transform:rotate(90deg) scaleX(0.8527)">Gradle</div>
<div class="t" style="left:928.9px;top:515.25px;width:134.22px;font-size:15px;transform:rotate(90deg) scaleX(0.8903)">Device File Explorer</div>
<div class="a" style="left:8px;top:58px;width:9px;height:1px;background:#000"></div>
<div class="a" style="left:47px;top:58px;width:11px;height:1px;background:#000"></div>
<div class="a" style="left:90px;top:58px;width:10px;height:1px;background:#000"></div>
<div class="a" style="left:140px;top:58px;width:11px;height:1px;background:#000"></div>
<div class="a" style="left:218px;top:58px;width:11px;height:1px;background:#000"></div>
<div class="a" style="left:310px;top:58px;width:7px;height:1px;background:#000"></div>
<div class="a" style="left:342px;top:58px;width:12px;height:1px;background:#000"></div>
<div class="a" style="left:419px;top:58px;width:11px;height:1px;background:#000"></div>
<div class="a" style="left:481px;top:58px;width:9px;height:1px;background:#000"></div>
<div class="a" style="left:513px;top:58px;width:8px;height:1px;background:#000"></div>
<div class="a" style="left:587px;top:58px;width:9px;height:1px;background:#000"></div>
<div class="a" style="left:611px;top:58px;width:16px;height:1px;background:#000"></div>
<div class="a" style="left:686px;top:58px;width:12px;height:1px;background:#000"></div>
<div class="a" style="left:149px;top:632px;width:8px;height:1px;background:#000"></div>
<div class="a" style="left:519px;top:632px;width:8px;height:1px;background:#000"></div>
<div class="a" style="left:22px;top:199px;width:1px;height:8px;background:#000"></div>
<div class="a" style="left:22px;top:322px;width:1px;height:8px;background:#000"></div>
<!-- window border -->
<div class="a" style="left:0;top:0;width:1012px;height:1px;background:#1883d7"></div>
<div class="a" style="left:0;top:0;width:1px;height:667px;background:#1883d7"></div>
<div class="a" style="left:1011px;top:0;width:1px;height:667px;background:#1883d7"></div>
<div class="a" style="left:0;top:666px;width:1012px;height:1px;background:#1883d7"></div>
</body></html>
